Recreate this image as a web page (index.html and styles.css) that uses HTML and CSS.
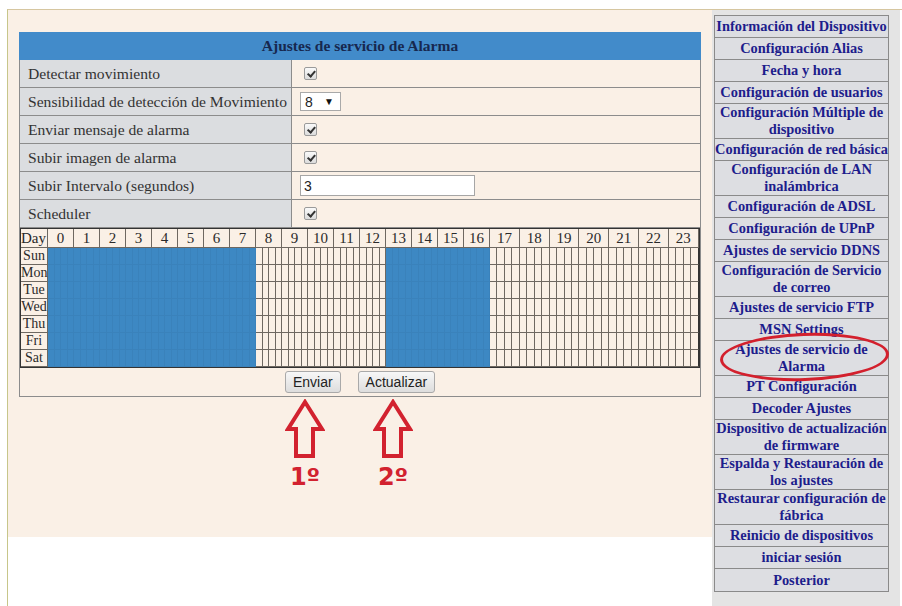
FILE: index.html
```html
<!DOCTYPE html>
<html lang="es">
<head>
<meta charset="utf-8">
<title>Ajustes de servicio de Alarma</title>
<link rel="stylesheet" href="styles.css">
</head>
<body>
<div class="frame">
  <main class="main">
    <section class="panel">
      <div class="hdr">Ajustes de servicio de Alarma</div>
      <div class="row"><div class="lbl">Detectar movimiento</div><div class="val"><span class="cb"></span></div></div>
      <div class="row"><div class="lbl">Sensibilidad de detección de Movimiento</div><div class="val"><span class="sel">8<span class="caret">▼</span></span></div></div>
      <div class="row"><div class="lbl">Enviar mensaje de alarma</div><div class="val"><span class="cb"></span></div></div>
      <div class="row"><div class="lbl">Subir imagen de alarma</div><div class="val"><span class="cb"></span></div></div>
      <div class="row"><div class="lbl">Subir Intervalo (segundos)</div><div class="val"><input class="txt" type="text" value="3"></div></div>
      <div class="row"><div class="lbl">Scheduler</div><div class="val"><span class="cb"></span></div></div>
      <div class="grid">
        <div class="gh first">Day</div>
        <div class="gh hr">0</div><div class="gh hr">1</div><div class="gh hr">2</div><div class="gh hr">3</div>
        <div class="gh hr">4</div><div class="gh hr">5</div><div class="gh hr">6</div><div class="gh hr">7</div>
        <div class="gh hr">8</div><div class="gh hr">9</div><div class="gh hr">10</div><div class="gh hr">11</div>
        <div class="gh hr">12</div><div class="gh hr">13</div><div class="gh hr">14</div><div class="gh hr">15</div>
        <div class="gh hr">16</div><div class="gh hr">17</div><div class="gh hr">18</div><div class="gh hr">19</div>
        <div class="gh hr">20</div><div class="gh hr">21</div><div class="gh hr">22</div><div class="gh hr">23</div>
        <div class="day">Sun</div>
        <div class="day">Mon</div>
        <div class="day">Tue</div>
        <div class="day">Wed</div>
        <div class="day">Thu</div>
        <div class="day">Fri</div>
        <div class="day">Sat</div>
      </div>
      <div class="btns"><button class="btn">Enviar</button><button class="btn">Actualizar</button></div>
    </section>
    <div class="annot">
      <div class="mark">
        <svg class="arrow" viewBox="0 0 40 60"><polygon points="20,3 37,30 28,30 28,57 11,57 11,30 3,30" fill="none" stroke="#d2222f" stroke-width="4"/></svg>
        <span class="num">1º</span>
      </div>
      <div class="mark">
        <svg class="arrow" viewBox="0 0 40 60"><polygon points="20,3 37,30 28,30 28,57 11,57 11,30 3,30" fill="none" stroke="#d2222f" stroke-width="4"/></svg>
        <span class="num">2º</span>
      </div>
    </div>
  </main>
  <aside class="side">
    <nav class="menu">
      <a class="item">Información del Dispositivo</a>
      <a class="item">Configuración Alias</a>
      <a class="item">Fecha y hora</a>
      <a class="item">Configuración de usuarios</a>
      <a class="item">Configuración Múltiple de<br>dispositivo</a>
      <a class="item">Configuración de red básica</a>
      <a class="item">Configuración de LAN<br>inalámbrica</a>
      <a class="item">Configuración de ADSL</a>
      <a class="item">Configuración de UPnP</a>
      <a class="item">Ajustes de servicio DDNS</a>
      <a class="item">Configuración de Servicio<br>de correo</a>
      <a class="item">Ajustes de servicio FTP</a>
      <a class="item">MSN Settings</a>
      <a class="item">Ajustes de servicio de<br>Alarma</a>
      <a class="item">PT Configuración</a>
      <a class="item">Decoder Ajustes</a>
      <a class="item">Dispositivo de actualización<br>de firmware</a>
      <a class="item">Espalda y Restauración de<br>los ajustes</a>
      <a class="item">Restaurar configuración de<br>fábrica</a>
      <a class="item">Reinicio de dispositivos</a>
      <a class="item">iniciar sesión</a>
      <a class="item">Posterior</a>
    </nav>
    <div class="ring"></div>
  </aside>
</div>
<script src="script.js"></script>
</body>
</html>
```
FILE: styles.css
```css
body {
  margin: 0;
  background: #fff;
  font-family: "Liberation Serif", "Times New Roman", serif;
}
.frame {
  display: flex;
  align-items: flex-start;
  height: 597px;
  margin: 9px 0 0 7px;
  border-top: 1px solid #d6c6a0;
  border-left: 1px solid #c7c68a;
  box-sizing: border-box;
}
.main {
  flex: none;
  width: 704px;
  height: 527px;
  background: #faf0e6;
  padding: 22px 0 0 11px;
  box-sizing: border-box;
}
.side {
  flex: none;
  width: 188px;
  align-self: stretch;
  background: #e4e4e4;
  padding: 5px 0 0 2px;
  box-sizing: border-box;
  position: relative;
}
.panel {
  width: 682px;
  border: 1px solid #8c8c8c;
  border-top: 0;
  box-sizing: border-box;
}
.hdr {
  height: 28px;
  margin: 0 -1px;
  background: #428bca;
  color: #17284f;
  font-weight: bold;
  font-size: 15.5px;
  display: flex;
  align-items: center;
  justify-content: center;
}
.row {
  display: grid;
  grid-template-columns: 272px 1fr;
  height: 28px;
  border-bottom: 1px solid #8c8c8c;
  box-sizing: border-box;
}
.lbl {
  background: #dbdde0;
  border-right: 1px solid #8c8c8c;
  padding-left: 8px;
  display: flex;
  align-items: center;
  font-size: 15.6px;
  color: #333;
  white-space: nowrap;
}
.val {
  display: flex;
  align-items: center;
  padding-left: 8px;
}
.cb {
  position: relative;
  width: 13px;
  height: 13px;
  margin-left: 4px;
  box-sizing: border-box;
  border: 1px solid #9a9a9a;
  border-radius: 2px;
  background: linear-gradient(#fafafa, #dcdcdc);
}
.cb::after {
  content: "";
  position: absolute;
  left: 3.5px;
  top: 1px;
  width: 2.5px;
  height: 6px;
  border: solid #333;
  border-width: 0 2px 2px 0;
  transform: rotate(40deg);
}
.sel {
  display: inline-flex;
  align-items: center;
  justify-content: space-between;
  width: 41px;
  height: 19px;
  box-sizing: border-box;
  padding: 0 6px 0 4px;
  border: 1px solid #a9a9a9;
  background: #fff;
  font: 14px "Liberation Sans", Arial, sans-serif;
  color: #222;
}
.caret {
  font-size: 10px;
  color: #111;
}
.txt {
  width: 175px;
  height: 21px;
  box-sizing: border-box;
  margin: 0;
  padding: 0 3px;
  border: 1px solid #a6a6a6;
  background: #fff;
  font: 14px "Liberation Sans", Arial, sans-serif;
  color: #222;
}
.grid {
  display: grid;
  grid-template-columns: 27px repeat(68, 6.5px) repeat(28, 7.464px);
  grid-template-rows: 19px repeat(7, 17px);
  border: 1px solid #333;
}
.gh, .day, .q {
  box-sizing: border-box;
  border-right: 1px solid #6e6861;
  border-bottom: 1px solid #6e6861;
}
.gh {
  font-size: 15px;
  line-height: 18px;
  color: #2a2a2a;
  text-align: center;
}
.gh.first {
  text-align: left;
}
.hr {
  grid-column: span 4;
}
.day {
  font-size: 14px;
  line-height: 16px;
  text-align: center;
  color: #2a2a2a;
}
.q.on {
  background: #3d88c3;
  border-color: #3a82bb;
}
.q.end {
  border-right-color: #333;
}
.btns {
  display: flex;
  justify-content: center;
  align-items: center;
  gap: 17px;
  height: 28px;
}
.btn {
  height: 22px;
  padding: 0 7px;
  font: 14px "Liberation Sans", Arial, sans-serif;
  color: #222;
  background: linear-gradient(#f7f7f7, #dddddd);
  border: 1px solid #a9a9a9;
  border-radius: 3px;
}
.annot {
  display: flex;
  gap: 48px;
  padding-left: 266px;
  margin-top: 2px;
}
.mark {
  width: 40px;
  display: flex;
  flex-direction: column;
  align-items: center;
}
.arrow {
  display: block;
  width: 40px;
  height: 60px;
}
.num {
  font: bold 24px/24px "DejaVu Sans", sans-serif;
  color: #d2222f;
  margin-top: 6px;
}
.menu {
  width: 175px;
  border: 1px solid #8a8a8a;
  box-sizing: border-box;
  display: flex;
  flex-direction: column;
}
.item {
  min-height: 22px;
  box-sizing: border-box;
  border-bottom: 1px solid #8a8a8a;
  background: #dddee2;
  display: flex;
  align-items: center;
  justify-content: center;
  text-align: center;
  font-weight: bold;
  font-size: 14.4px;
  line-height: 17px;
  color: #1d1d8c;
  text-decoration: none;
  white-space: nowrap;
}
.item:last-child {
  border-bottom: 0;
}
.ring {
  position: absolute;
  left: 8px;
  top: 323px;
  width: 169px;
  height: 48px;
  box-sizing: border-box;
  border: 3px solid #d3202d;
  border-radius: 50%;
  transform: rotate(-2deg);
}
```
FILE: script.js
```js
document.querySelectorAll('.grid .day').forEach(function (label) {
  var frag = document.createDocumentFragment();
  for (var q = 0; q < 96; q++) {
    var h = Math.floor(q / 4);
    var cell = document.createElement('span');
    cell.className = 'q';
    if (h <= 7 || (h >= 13 && h <= 16)) cell.classList.add('on');
    if (q === 95) cell.classList.add('end');
    frag.appendChild(cell);
  }
  label.after(frag);
});
```
